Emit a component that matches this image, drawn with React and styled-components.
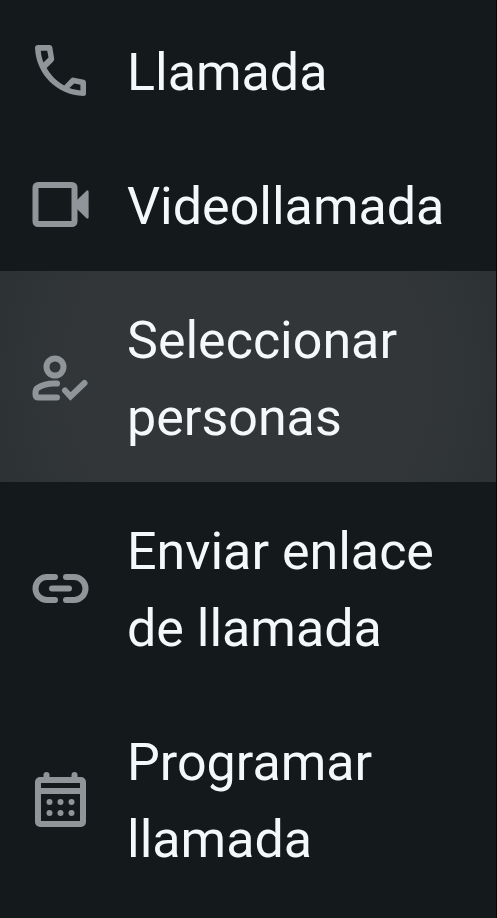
import React from "react";
import styled, { createGlobalStyle } from "styled-components";

const GlobalStyle = createGlobalStyle`
  * {
    box-sizing: border-box;
  }

  body {
    margin: 0;
    background: #14191c;
  }
`;

const Menu = styled.nav`
  display: flex;
  flex-direction: column;
  min-height: 100vh;
  padding-top: 3px;
  border-right: 1px solid #000;
  background: #14191c;
`;

const MenuItem = styled.button`
  display: flex;
  align-items: center;
  gap: 27px;
  width: 100%;
  padding: 31px 24px 26px 20px;
  border: 0;
  background: ${({ $active }) =>
    $active
      ? "radial-gradient(ellipse 80% 200% at 50% 50%, #323638 45%, #2b3033 75%)"
      : "transparent"};
  color: #f5f8fa;
  font-family: Roboto, sans-serif;
  font-size: 52px;
  line-height: 77px;
  text-align: left;
  cursor: pointer;
`;

const Icon = styled.svg`
  flex: none;
  width: 80px;
  height: 76px;
  fill: none;
  stroke: #8f9598;
  stroke-width: 6;
  stroke-linecap: round;
  stroke-linejoin: round;
`;

const Label = styled.span`
  flex: 1;
  min-width: 0;
`;

function PhoneIcon() {
  return (
    <Icon viewBox="0 3 80 76" aria-hidden="true">
      <path
        fill="#8f9598"
        stroke="none"
        fillRule="evenodd"
        d="M18 13H29.5Q31.8 13 32.3 15.3L34.2 26.5Q34.4 28.3 33 29.7L26.6 36.1C31 43.5 36.5 49.4 44.2 53.5L50.7 46.7Q52 45.3 53.9 45.7L64 47.8Q66 48.3 66 50.4V61.5Q66 64 63.3 64C37 63.2 16 42 15 16Q15 13 18 13ZM20.8 18.8C21 22.9 22.1 27 23.5 30.5L28.5 25.6L27.2 18.8ZM49.4 56.1C53.2 57.5 57.1 58.2 60.4 58.4V52.7L54.2 51.4Z"
      />
    </Icon>
  );
}

function VideoIcon() {
  return (
    <Icon viewBox="0 2 80 76" aria-hidden="true">
      <rect x="15.5" y="18" width="39" height="39" rx="2.5" />
      <path
        fill="#8f9598"
        stroke="none"
        d="M56 34L66.5 23.8Q68.600 22.5 68.600 25V50Q68.600 52.5 66.5 51.2L56 41Z"
      />
    </Icon>
  );
}

function PeopleIcon() {
  return (
    <Icon viewBox="0 1 80 76" aria-hidden="true">
      <circle cx="35" cy="27" r="8.5" />
      <path
        strokeLinejoin="miter"
        d="M37 43.5C29 43 22 45 17.5 48Q15.5 49.5 15.5 53V54.5Q15.5 57.5 18.5 57.5H37M45 50.5L50.5 56.5L64.5 43"
      />
    </Icon>
  );
}

function LinkIcon() {
  return (
    <Icon viewBox="0 1 80 76" aria-hidden="true">
      <path d="M35 26H27A11.5 11.5 0 0 0 27 49H35M46 26H54A11.5 11.5 0 0 1 54 49H46M32 37.5H49" />
    </Icon>
  );
}

function CalendarIcon() {
  return (
    <Icon viewBox="0 1 80 76" aria-hidden="true">
      <path d="M26.5 17V13M54.5 17V13M18 29H63" />
      <rect x="18" y="18" width="45" height="44" rx="2" />
      <g fill="#8f9598" stroke="none">
        <circle cx="29.5" cy="40" r="3" />
        <circle cx="40.5" cy="40" r="3" />
        <circle cx="51.5" cy="40" r="3" />
        <circle cx="29.5" cy="51" r="3" />
        <circle cx="40.5" cy="51" r="3" />
        <circle cx="51.5" cy="51" r="3" />
      </g>
    </Icon>
  );
}

const items = [
  { label: "Llamada", icon: PhoneIcon },
  { label: "Videollamada", icon: VideoIcon },
  { label: "Seleccionar personas", icon: PeopleIcon, active: true },
  { label: "Enviar enlace de llamada", icon: LinkIcon },
  { label: "Programar llamada", icon: CalendarIcon },
];

function App() {
  return (
    <>
      <GlobalStyle />
      <Menu aria-label="Llamadas">
        {items.map(({ label, icon: ItemIcon, active }) => (
          <MenuItem key={label} type="button" $active={active}>
            <ItemIcon />
            <Label>{label}</Label>
          </MenuItem>
        ))}
      </Menu>
    </>
  );
}

export default App;
